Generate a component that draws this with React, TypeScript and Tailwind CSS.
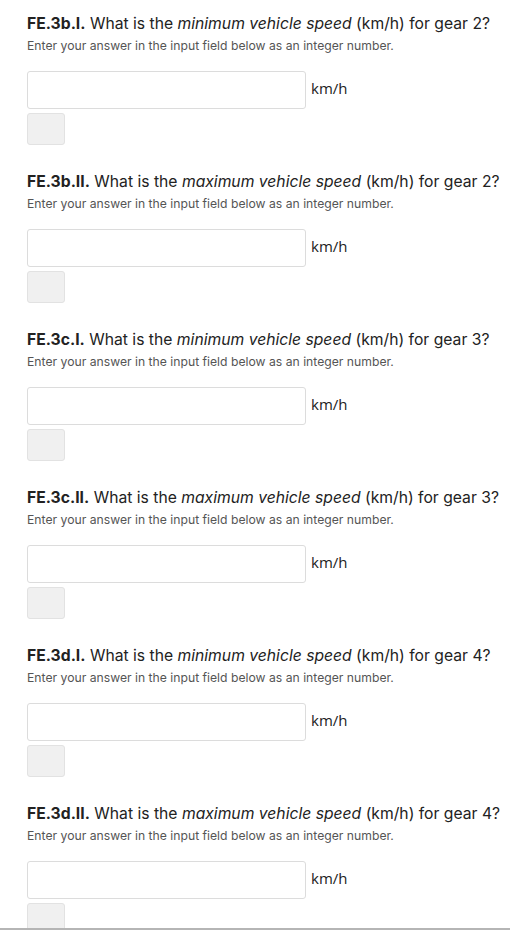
import React from "react";

const items = [
  { id: "FE.3b.I.", kind: "minimum", gear: 2 },
  { id: "FE.3b.II.", kind: "maximum", gear: 2 },
  { id: "FE.3c.I.", kind: "minimum", gear: 3 },
  { id: "FE.3c.II.", kind: "maximum", gear: 3 },
  { id: "FE.3d.I.", kind: "minimum", gear: 4 },
  { id: "FE.3d.II.", kind: "maximum", gear: 4 },
];

export default function App() {
  return (
    <div className="relative w-[510px] h-[930px] overflow-hidden bg-white font-['Inter',sans-serif]">
      <div className="pl-[27px] pt-[13px]">
        {items.map((it) => (
          <div key={it.id} className="mb-[26px]">
            <div className="text-[15.7px] leading-[22px] text-[#222] whitespace-nowrap">
              <span className="font-bold">{it.id}</span> What is the{" "}
              <em>{it.kind} vehicle speed</em> (km/h) for gear {it.gear}?
            </div>
            <div className="mt-[3px] text-[12.2px] leading-[16px] text-[#555] whitespace-nowrap">
              Enter your answer in the input field below as an integer number.
            </div>
            <div className="mt-[17px] flex items-start">
              <div className="w-[279px] h-[38px] rounded-[3px] border border-[#dcdcdc] bg-white" />
              <span className="ml-[5px] mt-[7px] text-[15px] leading-[20px] text-[#222] font-['Open_Sans',sans-serif]">
                km/h
              </span>
            </div>
            <div className="mt-[4px] w-[38px] h-[32px] rounded-[3px] border border-[#e2e2e2] bg-[#f0f0f0]" />
          </div>
        ))}
      </div>
      <div className="absolute left-0 right-0 top-[928px] h-[2px] bg-[#b5b5b5]" />
    </div>
  );
}
